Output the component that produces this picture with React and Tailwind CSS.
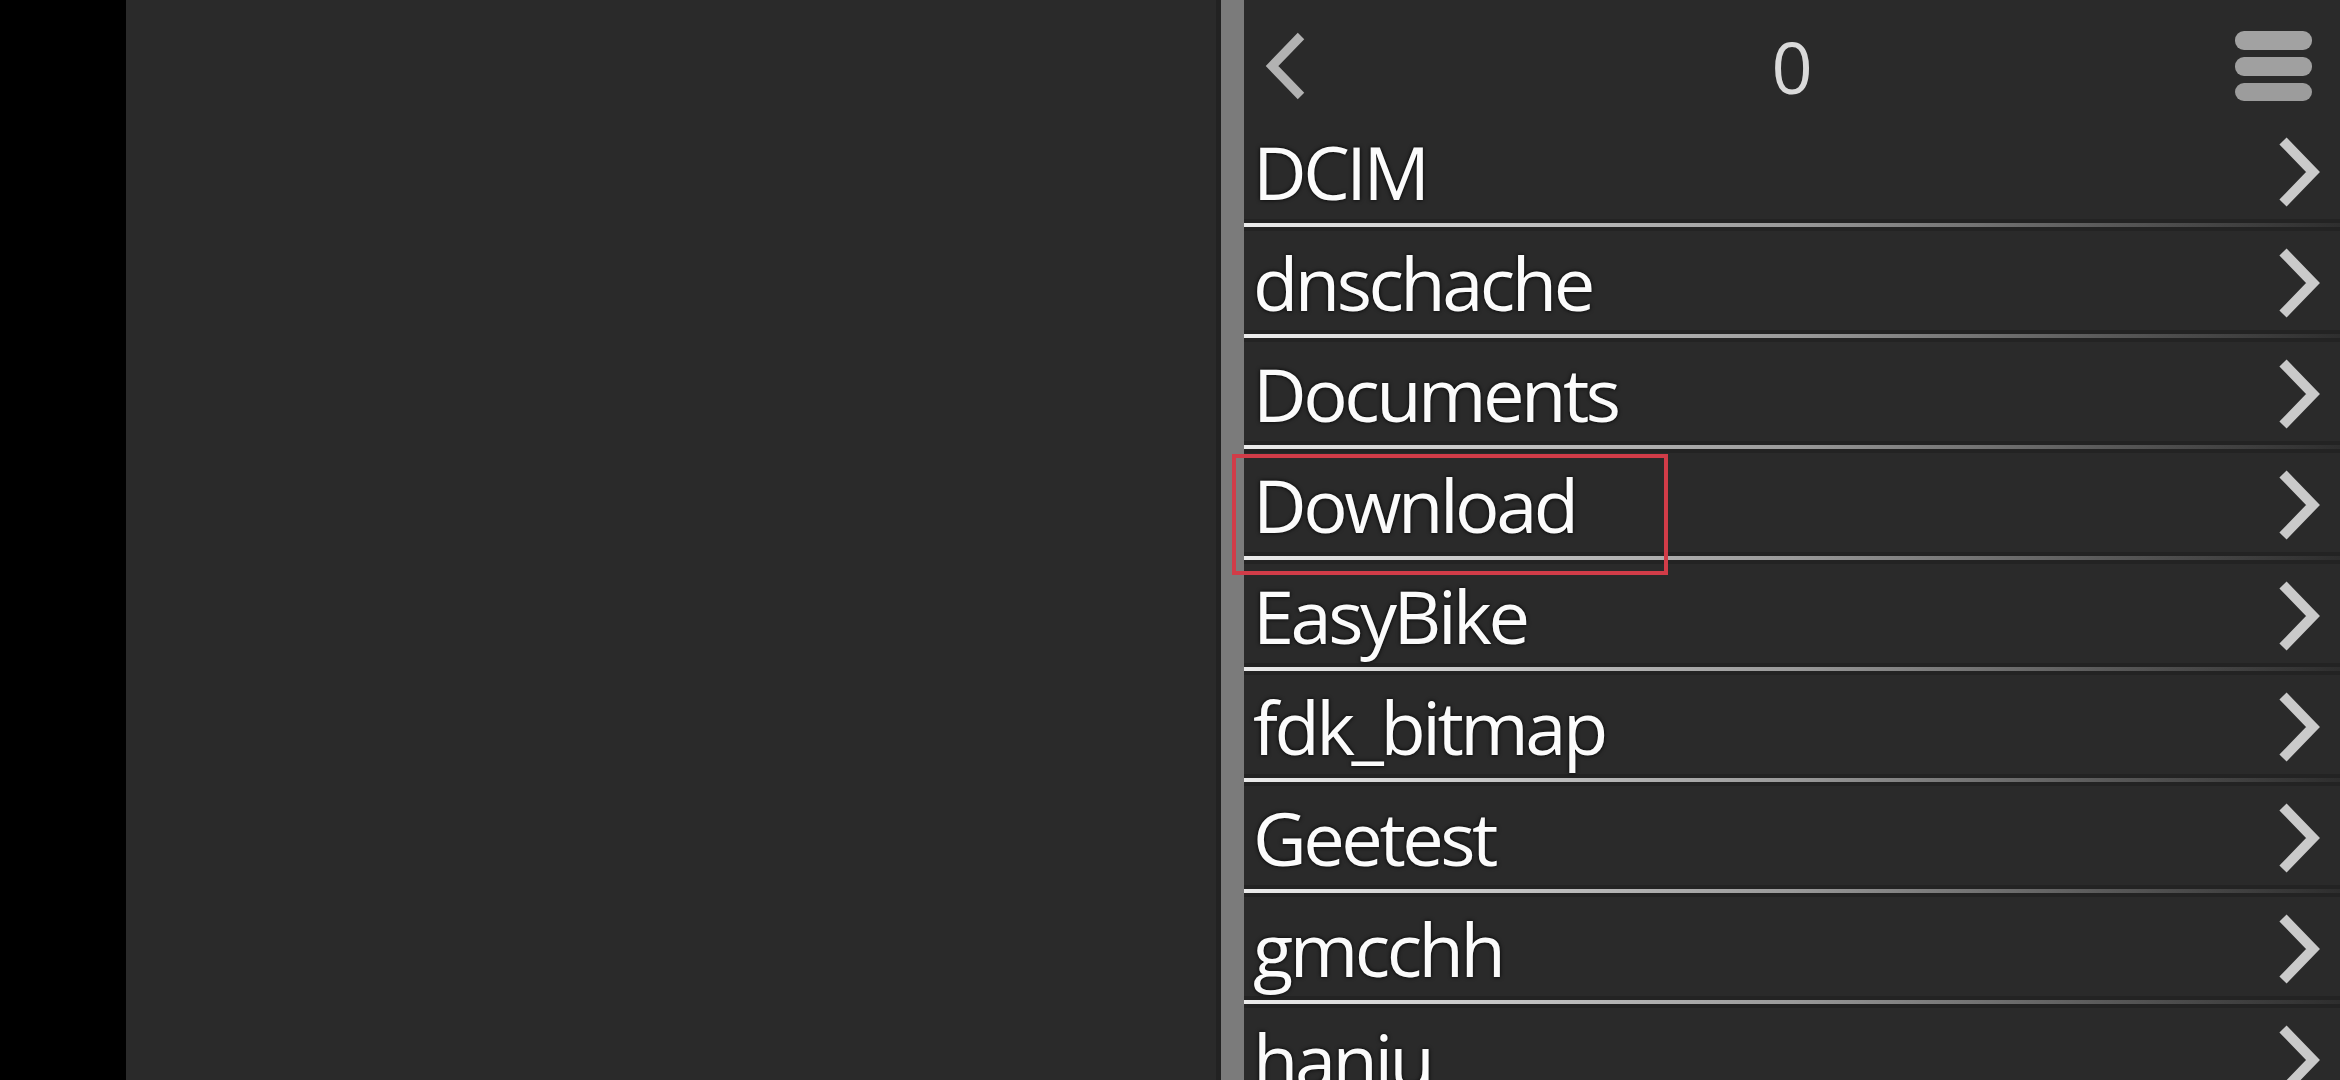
import React from 'react';

const folders = ['DCIM', 'dnschache', 'Documents', 'Download', 'EasyBike', 'fdk_bitmap', 'Geetest', 'gmcchh', 'haniu'];

const BackArrow = () => (
    <svg width="50" height="80" viewBox="0 0 50 80" className="block">
        <polyline points="41,10 12,40 41,70" fill="none" stroke="#b2b2b2" strokeWidth="9" strokeLinejoin="miter" />
    </svg>
);

const NextArrow = () => (
    <svg width="50" height="80" viewBox="0 0 50 80" className="block">
        <polyline points="8,9 38,40 8,71" fill="none" stroke="#cacaca" strokeWidth="10" strokeLinejoin="miter" />
    </svg>
);

const FolderRow = ({ name, marked }) => (
    <div className="relative">
        <div className="h-[107px] pt-[4px] flex items-center justify-between pl-[9px] pr-[15px]">
            <span className="text-[74px] tracking-[-3.5px] text-[#fbfbfb] [text-shadow:0_0_4px_#000]" style={{ fontFamily: '"Open Sans", "Noto Sans", sans-serif' }}>
                {name}
            </span>
            <NextArrow />
        </div>
        {/* separator: light on the left, fading out to the right */}
        <div className="h-[4px] bg-gradient-to-r from-[#ececec] via-[#9a9a9a] to-[#2e2e2e] shadow-[0_-4px_0_#232323,0_4px_0_#232323]" />
        {marked && (
            <div className="absolute left-[-12px] top-[5px] w-[436px] h-[121px] border-[4px] border-[#d13c48]" />
        )}
    </div>
);

const App = () => {
    return (
        <div className="w-[2340px] h-[1080px] flex overflow-hidden bg-[#2a2a2a]">
            <div className="w-[126px] bg-black" />
            <div className="flex-1 bg-[#2a2a2a]" />
            <div className="w-[5px] bg-[#222222]" />
            <div className="w-[23px] bg-[#7b7b7b]" />
            <div className="w-[1096px] flex flex-col bg-[#2a2a2a]">
                <div className="h-[116px] shrink-0 pt-[16px] grid grid-cols-[1fr_auto_1fr] items-center">
                    <div className="pl-[16px]">
                        <BackArrow />
                    </div>
                    <span className="text-[72px] text-[#dadada] leading-none" style={{ fontFamily: '"Open Sans", "Noto Sans", sans-serif' }}>
                        0
                    </span>
                    <div className="flex justify-end pr-[28px]">
                        <div className="flex flex-col gap-[7px]">
                            <div className="w-[77px] h-[19px] rounded-[9px] bg-[#a2a2a2]" />
                            <div className="w-[77px] h-[19px] rounded-[9px] bg-[#a0a0a0]" />
                            <div className="w-[77px] h-[18px] rounded-[9px] bg-[#9c9c9c]" />
                        </div>
                    </div>
                </div>
                {folders.map((f) => (
                    <FolderRow key={f} name={f} marked={f === 'Download'} />
                ))}
            </div>
        </div>
    );
};

export default App;
